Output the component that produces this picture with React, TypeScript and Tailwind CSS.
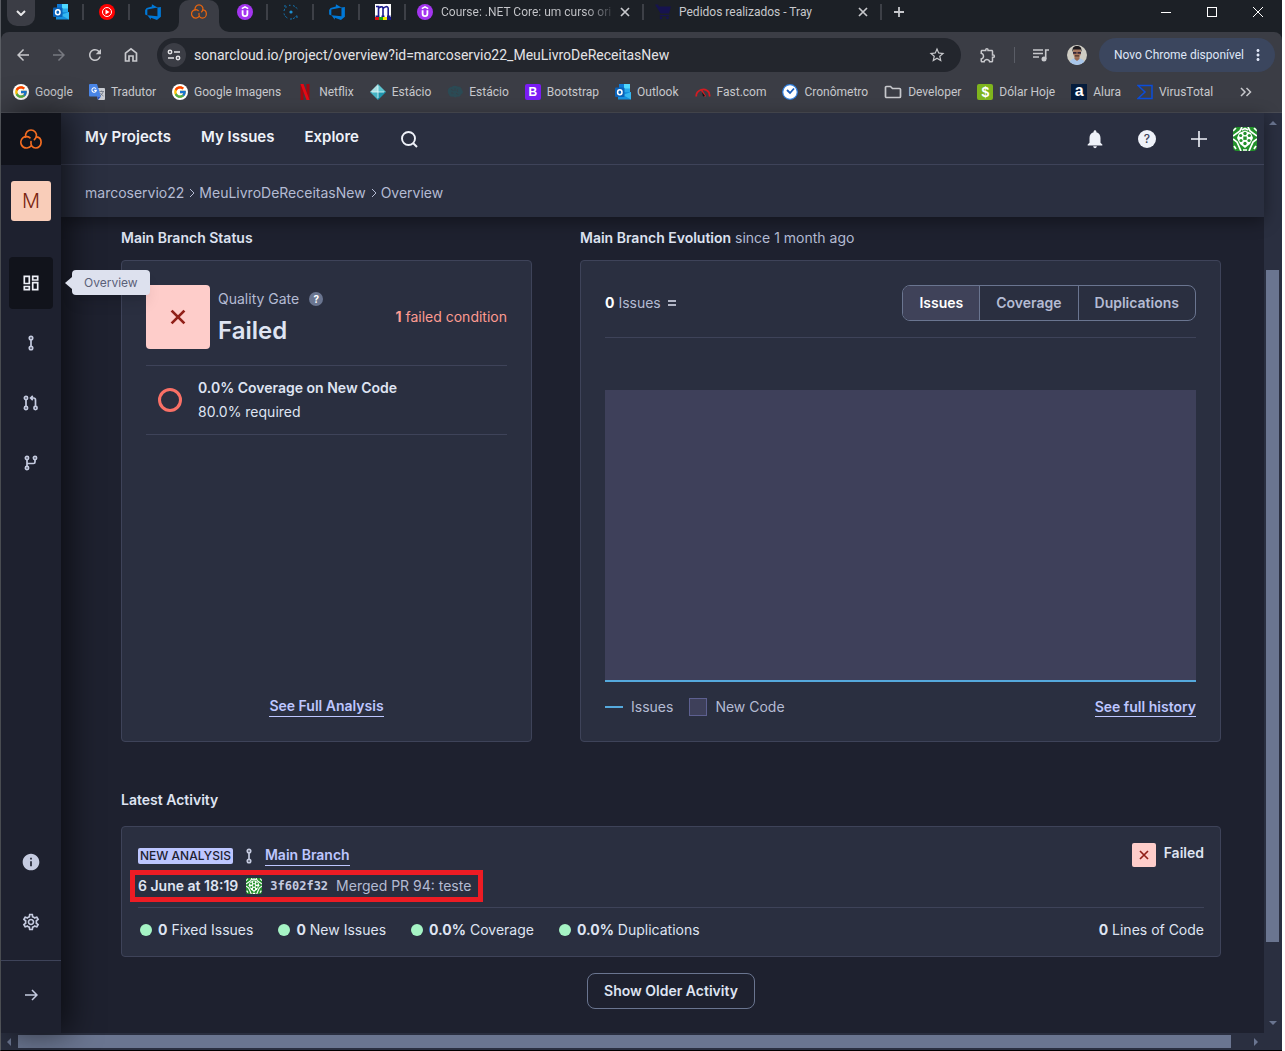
import type { ReactNode } from 'react'
import { FcGoogle } from 'react-icons/fc'
import { VscAzureDevops } from 'react-icons/vsc'
import {
  MdArrowBack,
  MdArrowForward,
  MdInfo,
  MdMoreVert,
  MdNotifications,
  MdOutlineExtension,
  MdOutlineSettings,
  MdRefresh,
  MdStarBorder,
} from 'react-icons/md'

/* ---------- Icons ---------- */

function SonarLogo({ className }: { className: string }) {
  return (
    <svg viewBox="0 0 22 20" fill="none" stroke="currentColor" strokeWidth="1.700" strokeLinecap="round" className={className}>
      <path d="M5.600 8C4.900 4.200 7.600 1 11 1s6.200 3 5.300 6.600c-.3 1.300-1 2.200-1.900 3" />
      <path d="M10 8.800C8.200 7.200 5 7.200 3.100 8.700 .9 10.400.3 13.600 1.500 16c1.100 2.200 3.400 3.100 5.500 3s3.300-1 4.200-2.200" />
      <path d="M16.400 7.900c2.700.3 4.700 2.500 4.700 5.400 0 3.200-2.400 5.700-5.400 5.700-3.200 0-5.300-2.600-4.700-6.500" />
    </svg>
  )
}

function Outlook() {
  return (
    <svg viewBox="0 0 16 16" className="size-4">
      <path d="M4 0h11v9H4z" fill="#28a8ea" />
      <path d="M9 0h6v4.500H9z" fill="#50d9ff" />
      <path d="M4 0h5v4.500H4z" fill="#0f78d4" />
      <path d="M3 8h13v7.500H3z" fill="#1490df" />
      <path d="M16 8v7.500L8 11z" fill="#35b8f1" />
      <rect x="0" y="3.500" width="9.500" height="9.500" rx="1" fill="#0a62b8" />
      <ellipse cx="4.800" cy="8.200" rx="2.200" ry="2.500" fill="none" stroke="#fff" strokeWidth="1.500" />
    </svg>
  )
}

function YouTubeMusic() {
  return (
    <svg viewBox="0 0 16 16" className="size-4">
      <circle cx="8" cy="8" r="8" fill="#f00" />
      <circle cx="8" cy="8" r="4.500" fill="none" stroke="#fff" />
      <path d="M6.500 5.500 10.500 8l-4 2.500z" fill="#fff" />
    </svg>
  )
}

function Udemy() {
  return (
    <svg viewBox="0 0 16 16" className="size-4">
      <circle cx="8" cy="8" r="8" fill="#a435f0" />
      <path d="m4.800 4.700 3.200-1.900 3.200 1.900" fill="none" stroke="#fff" strokeWidth="1.500" />
      <path d="M5.600 6.200v3.600a2.400 2.400 0 0 0 4.800 0V6.200" fill="none" stroke="#fff" strokeWidth="1.800" />
    </svg>
  )
}

function DottedOrbit() {
  return (
    <svg viewBox="0 0 16 16" fill="none" stroke="#1277b5" className="size-4">
      <circle cx="8" cy="8" r="1.600" fill="#1e8fd0" stroke="none" />
      <path d="M1 7a7 7 0 0 1 3-4.500M6 1.300h1.500M10 1.600a7 7 0 0 1 4.500 4M1 9.500a7 7 0 0 0 4 4.800M7 15a7 7 0 0 0 7-4" strokeDasharray="2 1" />
      <path d="M1 2h2M13 13h2" />
    </svg>
  )
}

function LetterM() {
  return (
    <svg viewBox="0 0 16 16" className="size-4">
      <path d="M0 0h16v13H0z" fill="#fff" />
      <path d="M1 2.500h2.500V12M.5 12.300h4M3.300 5C4 3 8 1.500 8 4.500V12M6.500 12.300h3M8 5c1-2.500 5-3.500 5.200-.5V12M12 12.300h3.500" fill="none" stroke="#1a1a8c" strokeWidth="1.600" />
      <path d="M0 13h4v3H0z" fill="#e01010" />
      <path d="M4 13h4v3H4z" fill="#18a818" />
      <path d="M8 13h4v3H8z" fill="#f5e800" />
      <path d="M12 13h4v3h-4z" fill="#1a1a8c" />
    </svg>
  )
}

function Cart() {
  return (
    <svg viewBox="0 0 16 16" className="size-4">
      <path d="M0 .5h3l1 2h12l-2 7H5.500zM5 11h9v1.200H4.500z" fill="#16134f" />
      <circle cx="6" cy="14" r="1.300" fill="#16134f" />
      <circle cx="12.500" cy="14" r="1.300" fill="#16134f" />
    </svg>
  )
}

function GoogleRound() {
  return (
    <span className="flex size-4 items-center justify-center rounded-full bg-white">
      <FcGoogle className="size-3.5" />
    </span>
  )
}

function Translate() {
  return (
    <svg viewBox="0 0 16 16" className="size-4">
      <path d="M6 4h9a1 1 0 0 1 1 1v10a1 1 0 0 1-1 1H9z" fill="#c9ccd2" />
      <path d="M1 0h7l4 12.500H1a1 1 0 0 1-1-1V1a1 1 0 0 1 1-1z" fill="#4a86e8" />
      <path d="M7 4.800a2.200 2.200 0 1 0 .3 1.600H5.200" fill="none" stroke="#fff" strokeWidth="1.100" />
      <path d="M10.500 7.500h4.500M12.600 6.500v1M14.200 7.500c-.5 2-1.800 3.500-3.200 4.300M11.500 9c.8 1.500 1.800 2.400 3 3" fill="none" stroke="#6b7280" strokeWidth=".8" />
      <path d="M9 16l3-3.500H8z" fill="#2a56c6" />
    </svg>
  )
}

function Netflix() {
  return (
    <svg viewBox="0 0 16 16" className="size-4">
      <path d="M3.500 0h3v16h-3zM9.500 0h3v16h-3z" fill="#a4060f" />
      <path d="M3.500 0h3l6 16h-3z" fill="#e50914" />
    </svg>
  )
}

function Diamond() {
  return (
    <svg viewBox="0 0 16 16" className="size-4">
      <path d="M8 0 0 8h8z" fill="#a9dfe4" />
      <path d="m8 0 8 8H8z" fill="#5cc3cf" />
      <path d="M0 8h8v8z" fill="#46b4c4" />
      <path d="M16 8H8v8z" fill="#1d93ac" />
      <path d="M8 2v12M2 8h12" stroke="#e6fafa" strokeWidth=".8" />
    </svg>
  )
}

function Brain() {
  return (
    <svg viewBox="0 0 16 16" fill="#2b4a54" className="size-4">
      <path d="M1 8c-1-3 1.500-5 3.500-5C6 1.500 9 1.200 10.500 2.500 13 2.300 15 4 15 6c1.500 1.500 1 4-1 4.500-.5 2-2.500 2.500-4 2-1 1.500-3 1-3.500 0C4 13.500 2 12 2 10.500 1.300 10 1 9 1 8z" />
      <path d="M4 5.500c1 0 2 .5 2 1.500M8 4v3M11 5c-1 1-1 2 0 3M4 9c1-.5 2 0 2.500 1M9 9.500c1 0 2 .5 2 1.500" fill="none" stroke="#3b3d45" strokeWidth=".7" />
    </svg>
  )
}

function Bootstrap() {
  return (
    <span className="flex size-4 items-center justify-center rounded-xs bg-[#7a1cf5] font-['Liberation_Sans'] text-xs font-bold text-white" aria-hidden="true">
      B
    </span>
  )
}

function Gauge() {
  return (
    <svg viewBox="0 0 16 16" fill="none" className="size-4">
      <path d="M1.200 12.500A7 7 0 0 1 14 8.500l.8 4" stroke="#d31c22" strokeWidth="1.800" />
      <path d="m6.500 6 4 6.500" stroke="#d31c22" strokeWidth="1.500" />
      <path d="M8 12.500 7 8l3 4z" fill="#101010" />
    </svg>
  )
}

function Clock() {
  return (
    <svg viewBox="0 0 16 16" fill="none" className="size-4">
      <circle cx="8" cy="8" r="7.300" fill="#fff" stroke="#2f7fe0" strokeWidth="1.200" />
      <path d="m5 6 3 3 4-4.500" stroke="#1b5cb8" strokeWidth="1.800" />
    </svg>
  )
}

function Folder() {
  return (
    <svg viewBox="0 0 18 16" fill="none" stroke="#c7c8cc" strokeWidth="1.700" className="h-4 w-[18px]">
      <path d="M1.500 3.500a1 1 0 0 1 1-1h4l2 2h7a1 1 0 0 1 1 1v7a1 1 0 0 1-1 1h-13a1 1 0 0 1-1-1z" />
    </svg>
  )
}

function Dollar() {
  return (
    <span className="flex size-4 items-center justify-center rounded-xs bg-[#7fb51d] font-['Liberation_Sans'] text-sm font-bold text-white" aria-hidden="true">
      $
    </span>
  )
}

function Alura() {
  return (
    <span className="flex size-4 items-center justify-center bg-[#041c3c] pb-0.5 font-['Liberation_Sans'] text-base leading-4 font-bold text-white" aria-hidden="true">
      a
    </span>
  )
}

function VirusTotal() {
  return (
    <svg viewBox="0 0 16 16" fill="none" stroke="#0b4dda" strokeWidth="1.500" className="size-4">
      <path d="M1 1.500h14v13H1L8 8z" />
    </svg>
  )
}

function House() {
  return (
    <svg viewBox="0 0 16 16" fill="none" stroke="currentColor" strokeWidth="1.700" className="size-4">
      <path d="M2.500 14V6.200L8 1.800l5.500 4.400V14H10V9H6v5z" />
    </svg>
  )
}

function Tune() {
  return (
    <svg viewBox="0 0 14 12" fill="none" stroke="currentColor" strokeWidth="1.500" className="h-3 w-3.5">
      <circle cx="3" cy="3" r="1.700" />
      <path d="M7 3h6M1 9h6" />
      <circle cx="11" cy="9" r="1.700" />
    </svg>
  )
}

function MusicQueue() {
  return (
    <svg viewBox="0 0 16 14" fill="none" stroke="currentColor" strokeWidth="1.600" className="h-3.5 w-4">
      <path d="M0 2h10M0 5.500h10M0 9h6M12.700 11V2H16" />
      <circle cx="11" cy="11" r="1.700" fill="currentColor" />
    </svg>
  )
}

function Cross({ className }: { className: string }) {
  return (
    <svg viewBox="0 0 10 10" fill="none" stroke="currentColor" strokeWidth="1.700" className={className}>
      <path d="m1 1 8 8M9 1 1 9" />
    </svg>
  )
}

function UserPhoto() {
  return (
    <svg viewBox="0 0 20 20" className="size-5 rounded-full">
      <path d="M0 0h20v20H0z" fill="#cfcdc4" />
      <path d="M2 20c0-5 3.500-7 8-7s8 2 8 7z" fill="#a8c6ea" />
      <path d="M7.500 11h5v3L10 16l-2.500-2z" fill="#9a6a52" />
      <ellipse cx="10" cy="7.500" rx="4" ry="5.200" fill="#a87860" />
      <path d="M5.500 7C5 2.500 7 1 10 1s5 1.500 4.500 6L13.500 4.500h-7z" fill="#1d1a1e" />
      <path d="M6 7h3.500v1.800H6zM10.500 7H14v1.800h-3.500z" fill="#33263a" />
      <path d="M8 10.300h4v1.200H8z" fill="#4a3028" />
    </svg>
  )
}

function Identicon({ className }: { className: string }) {
  return (
    <svg viewBox="0 0 24 24" className={className}>
      <path d="M0 0h24v24H0z" fill="#23912b" />
      <path d="M12 3.500 18 6l2 5-3 6-5 4-5-4-3-6 2-5z" fill="#fff" />
      <path d="M0 9 7 4 9 0M24 9l-7-5-2-4M0 12l4 3 4 9M24 12l-4 3-4 9M9 3l3-1.500L15 3M0 4l3-3M24 4l-3-3M1 19l2 3M23 19l-2 3M10 23h4" fill="none" stroke="#fff" strokeWidth="1.700" />
      <g fill="#23912b">
        <circle cx="12" cy="6.500" r="1.700" />
        <circle cx="7.700" cy="8.500" r="1.600" />
        <circle cx="16.300" cy="8.500" r="1.600" />
        <rect x="10.300" y="9.500" width="3.400" height="3.400" />
        <circle cx="8" cy="13.500" r="1.600" />
        <circle cx="16" cy="13.500" r="1.600" />
        <circle cx="12" cy="16.500" r="1.700" />
      </g>
    </svg>
  )
}

function MainBranchIcon() {
  return (
    <svg viewBox="0 0 8 16" fill="none" stroke="currentColor" strokeWidth="1.700" className="h-4 w-2">
      <circle cx="4" cy="3" r="1.700" />
      <circle cx="4" cy="13" r="1.700" />
      <path d="M4 4.700v6.600" />
    </svg>
  )
}

function PullRequestIcon() {
  return (
    <svg viewBox="0 0 16 16" fill="none" stroke="currentColor" strokeWidth="1.700" className="size-4">
      <circle cx="3" cy="3" r="1.600" />
      <circle cx="3" cy="13" r="1.600" />
      <circle cx="12.500" cy="13" r="1.600" />
      <path d="M3 4.600v6.800M12.500 11.400V5a2 2 0 0 0-2-2H8M9.800.8 7.600 3l2.200 2.200" />
    </svg>
  )
}

function BranchIcon() {
  return (
    <svg viewBox="0 0 16 16" fill="none" stroke="currentColor" strokeWidth="1.700" className="size-4">
      <circle cx="4" cy="3" r="1.600" />
      <circle cx="4" cy="13" r="1.600" />
      <circle cx="12" cy="3" r="1.600" />
      <path d="M4 4.600v6.800M12 4.600V7a1.500 1.500 0 0 1-1.500 1.500H4" />
    </svg>
  )
}

function GridIcon() {
  return (
    <svg viewBox="0 0 16 16" fill="none" stroke="currentColor" strokeWidth="1.700" className="size-4">
      <path d="M1.300 1.300h5v7.200h-5zM9.700 1.300h5v3.700h-5zM1.300 11.500h5v3.200h-5zM9.700 7.700h5v7h-5z" />
    </svg>
  )
}

/* ---------- Browser chrome ---------- */

const pinnedTabs: { label: string; icon: ReactNode; active?: boolean; divider?: boolean }[] = [
  { label: 'Outlook', icon: <Outlook />, divider: true },
  { label: 'YouTube Music', icon: <YouTubeMusic />, divider: true },
  { label: 'Azure DevOps', icon: <VscAzureDevops className="size-[18px] text-[#0078d7]" /> },
  { label: 'SonarCloud', icon: <SonarLogo className="h-[15px] w-4 text-[#e8650f]" />, active: true },
  { label: 'Udemy', icon: <Udemy />, divider: true },
  { label: 'Orbit', icon: <DottedOrbit />, divider: true },
  { label: 'Azure DevOps board', icon: <VscAzureDevops className="size-[18px] text-[#0078d7]" />, divider: true },
  { label: 'M', icon: <LetterM />, divider: true },
]

const wideTabs = [
  { title: 'Course: .NET Core: um curso ori', icon: <Udemy />, fades: true },
  { title: 'Pedidos realizados - Tray', icon: <Cart />, fades: false },
]

const bookmarks: [string, ReactNode][] = [
  ['Google', <GoogleRound />],
  ['Tradutor', <Translate />],
  ['Google Imagens', <GoogleRound />],
  ['Netflix', <Netflix />],
  ['Estácio', <Diamond />],
  ['Estácio', <Brain />],
  ['Bootstrap', <Bootstrap />],
  ['Outlook', <Outlook />],
  ['Fast.com', <Gauge />],
  ['Cronômetro', <Clock />],
  ['Developer', <Folder />],
  ['Dólar Hoje', <Dollar />],
  ['Alura', <Alura />],
  ['VirusTotal', <VirusTotal />],
]

function TabStrip() {
  return (
    <div className="flex h-8 items-start overflow-hidden bg-[#1c2026] text-[#c7c8cc]">
      <button aria-label="Search tabs" className="ml-1.5 flex h-[26px] w-7 items-center justify-center rounded-b-[10px] bg-[#3b3d45]">
        <svg viewBox="0 0 10 6" fill="none" stroke="#e8e8ea" strokeWidth="2" className="h-1.5 w-2.5">
          <path d="m1 1 4 4 4-4" />
        </svg>
      </button>
      <div className="ml-[3px] flex">
        {pinnedTabs.map((tab) => (
          <div key={tab.label} className="flex h-8 w-[46px] items-start justify-center">
            {tab.active ? (
              <button
                aria-label={tab.label}
                className="relative flex h-8 w-10 items-start justify-center rounded-t-[10px] bg-[#3b3d45] pt-1 before:absolute before:bottom-0 before:-left-2.5 before:size-2.5 before:rounded-br-[10px] before:shadow-[5px_5px_0_5px_#3b3d45] before:[clip-path:inset(0)] after:absolute after:-right-2.5 after:bottom-0 after:size-2.5 after:rounded-bl-[10px] after:shadow-[-5px_5px_0_5px_#3b3d45] after:[clip-path:inset(0)]"
              >
                {tab.icon}
              </button>
            ) : (
              <button aria-label={tab.label} className={`flex h-6 flex-1 items-center justify-center ${tab.divider ? 'bg-[linear-gradient(#3d4047,#3d4047)] bg-[size:2px_16px] bg-right bg-no-repeat' : ''}`}>
                {tab.icon}
              </button>
            )}
          </div>
        ))}
      </div>
      {wideTabs.map((tab) => (
        <div key={tab.title} className="flex h-6 w-[238px] items-center bg-[linear-gradient(#3d4047,#3d4047)] bg-[size:2px_16px] bg-right bg-no-repeat pr-3.5 pl-[11px]">
          {tab.icon}
          <span className={`ml-2 whitespace-nowrap ${tab.fades ? 'bg-linear-to-r from-[#c7c8cc] from-85% to-[#3d4047] bg-clip-text text-transparent' : ''}`}>{tab.title}</span>
          <button aria-label={`Close ${tab.title}`} className="ml-auto">
            <Cross className="size-2.5" />
          </button>
        </div>
      ))}
      <button aria-label="New tab" className="ml-3 flex h-6 items-center">
        <svg viewBox="0 0 10 10" fill="none" stroke="currentColor" strokeWidth="1.800" className="size-2.5">
          <path d="M5 0v10M0 5h10" />
        </svg>
      </button>
      <div className="mr-px ml-auto flex h-6 text-white">
        <button aria-label="Minimize" className="flex w-[46px] items-center justify-center">
          <span className="h-px w-2.5 bg-white" />
        </button>
        <button aria-label="Maximize" className="flex w-[46px] items-center justify-center">
          <span className="size-2.5 border border-white" />
        </button>
        <button aria-label="Close" className="flex w-[46px] items-center justify-center">
          <svg viewBox="0 0 10 10" stroke="#fff" className="size-2.5">
            <path d="m0 0 10 10M10 0 0 10" />
          </svg>
        </button>
      </div>
    </div>
  )
}

function Toolbar() {
  return (
    <div className="bg-[#1c2026]">
      <div className="flex h-[46px] items-center rounded-t-lg bg-[#3b3d45] pr-[7px] pl-[13px] text-[#c7c8cc]">
        <div className="flex gap-[18px]">
          <button aria-label="Back"><MdArrowBack className="size-[18px]" /></button>
          <button aria-label="Forward" className="text-[#777980]"><MdArrowForward className="size-[18px]" /></button>
          <button aria-label="Reload"><MdRefresh className="size-[18px]" /></button>
          <button aria-label="Home" className="px-px"><House /></button>
        </div>
        <div className="ml-[17px] flex h-[34px] flex-1 items-center rounded-full bg-[#23262d] pr-[15px] pl-[5px]">
          <button aria-label="Site information" className="flex size-6 items-center justify-center rounded-full bg-[#3b3d45] text-[#e3e3e6]">
            <Tune />
          </button>
          <input
            aria-label="Address"
            className="ml-2 min-w-0 flex-1 bg-transparent text-sm text-[#e3e3e6] outline-none"
            defaultValue="sonarcloud.io/project/overview?id=marcoservio22_MeuLivroDeReceitasNew"
          />
          <button aria-label="Bookmark this page"><MdStarBorder className="size-[18px]" /></button>
        </div>
        <button aria-label="Extensions" className="ml-[18px]"><MdOutlineExtension className="size-[18px]" /></button>
        <span className="ml-[17px] h-4 w-px bg-[#5a5d66]" />
        <button aria-label="Media controls" className="ml-[18px]"><MusicQueue /></button>
        <button aria-label="Profile" className="ml-[18px]"><UserPhoto /></button>
        <button className="ml-3 flex h-[34px] w-[176px] items-center justify-between rounded-full bg-[#3b465e] pr-2 pl-[15px] whitespace-nowrap text-[#dfe6f7]">
          Novo Chrome disponível
          <MdMoreVert className="size-[18px] shrink-0" />
        </button>
      </div>
    </div>
  )
}

function BookmarksBar() {
  return (
    <nav className="flex h-[35px] items-center gap-4 overflow-hidden border-b border-[#4a4c54] bg-[#3b3d45] pb-1.5 pl-3 text-[#c7c8cc]">
      {bookmarks.map(([label, icon], i) => (
        <a key={i} href="#" className="flex items-center gap-1.5 whitespace-nowrap">
          {icon}
          {label}
        </a>
      ))}
      <button aria-label="More bookmarks" className="mr-[30px] ml-auto">
        <svg viewBox="0 0 12 10" fill="none" stroke="currentColor" strokeWidth="1.500" className="h-2.5 w-3">
          <path d="m1 1 4 4-4 4M6.500 1l4 4-4 4" />
        </svg>
      </button>
    </nav>
  )
}

/* ---------- Application ---------- */

function SideItem({ label, active, children }: { label: string; active?: boolean; children: ReactNode }) {
  return (
    <a href="#" aria-label={label} className={`flex h-[52px] w-11 items-center justify-center rounded ${active ? 'bg-[#11131b] text-[#eef0f7]' : ''}`}>
      {children}
    </a>
  )
}

function Sidebar() {
  return (
    <aside className="relative z-10 flex w-[60px] shrink-0 flex-col items-center bg-[#1e212f] text-[#c5cbe0] shadow-[8px_0_32px_rgba(0,0,0,0.6)]">
      <a href="#" aria-label="SonarCloud" className="flex h-[52px] w-full items-center justify-center bg-[#11131b] text-[#f36c21]">
        <SonarLogo className="h-5 w-[22px]" />
      </a>
      <a href="#" className="mt-4 flex size-10 items-center justify-center rounded-[3px] bg-[#f9cdb9] text-xl font-light text-[#7a2410]">
        M
      </a>
      <nav className="mt-9 flex flex-col gap-2">
        <div className="relative">
          <SideItem label="Overview" active><GridIcon /></SideItem>
          <div role="tooltip" className="absolute top-[13px] left-[63px] flex h-[25px] items-center rounded bg-[#dde1ee] px-3 text-xs text-[#5a6078] shadow-lg before:absolute before:-left-[7px] before:border-y-[6px] before:border-r-[7px] before:border-y-transparent before:border-r-[#dde1ee]">
            Overview
          </div>
        </div>
        <SideItem label="Main branch"><MainBranchIcon /></SideItem>
        <SideItem label="Pull requests"><PullRequestIcon /></SideItem>
        <SideItem label="Branches"><BranchIcon /></SideItem>
      </nav>
      <div className="mt-auto flex flex-col gap-2 pb-3">
        <SideItem label="Information"><MdInfo className="size-5" /></SideItem>
        <SideItem label="Administration"><MdOutlineSettings className="size-5" /></SideItem>
      </div>
      <button aria-label="Expand sidebar" className="flex h-[73px] w-full items-center justify-center border-t border-[#3e4359] pb-1">
        <svg viewBox="0 0 14 12" fill="none" stroke="currentColor" strokeWidth="1.500" className="h-3 w-3.5">
          <path d="M1 6h12M8 1l5 5-5 5" />
        </svg>
      </button>
    </aside>
  )
}

function Header() {
  return (
    <header className="relative z-[5] bg-[#2a2f40] shadow-[0_4px_16px_rgba(0,0,0,0.4)]">
      <div className="flex h-[52px] items-center border-b border-[#3e4359] pr-[7px] pl-6">
        <nav className="flex gap-[30px] pb-[3px] text-[15px] font-semibold text-[#eff2f9]">
          <a href="#">My Projects</a>
          <a href="#">My Issues</a>
          <a href="#">Explore</a>
        </nav>
        <button aria-label="Search" className="ml-[41px] text-[#eff2f9]">
          <svg viewBox="0 0 18 18" fill="none" stroke="currentColor" strokeWidth="1.900" className="size-[18px]">
            <circle cx="8.500" cy="8.500" r="6.500" />
            <path d="m13 13 4 4" />
          </svg>
        </button>
        <div className="ml-auto flex items-center text-[#eff2f9]">
          <button aria-label="Notifications"><MdNotifications className="size-[22px]" /></button>
          <button aria-label="Help" className="ml-8 flex size-[18px] items-center justify-center rounded-full bg-[#eff2f9] text-xs font-medium text-[#3e4359]">
            ?
          </button>
          <button aria-label="Create" className="ml-[33px]">
            <svg viewBox="0 0 20 20" fill="none" stroke="currentColor" strokeWidth="1.600" className="size-5">
              <path d="M10 2v16M2 10h16" />
            </svg>
          </button>
          <button aria-label="Account" className="ml-6">
            <Identicon className="size-6 rounded-sm" />
          </button>
        </div>
      </div>
      <nav aria-label="Breadcrumb" className="flex h-[52px] items-center gap-1 pt-1 pl-6 text-[#b4bbd3]">
        <a href="#">marcoservio22</a>
        <BreadcrumbArrow />
        <a href="#">MeuLivroDeReceitasNew</a>
        <BreadcrumbArrow />
        <span>Overview</span>
      </nav>
    </header>
  )
}

function BreadcrumbArrow() {
  return (
    <svg viewBox="0 0 7 10" fill="none" stroke="currentColor" className="h-2.5 w-[7px]">
      <path d="m2 1 4 4-4 4" />
    </svg>
  )
}

function Status() {
  return (
    <section className="flex flex-col">
      <h2 className="mb-3 font-semibold text-[#dfe4f2]">Main Branch Status</h2>
      <div className="flex h-[482px] flex-col rounded border border-[#3e4359] bg-[#2a2f40] p-6">
        <div className="flex h-[81px] items-start border-b border-[#3e4359]">
          <span className="flex size-16 items-center justify-center rounded bg-[#fecdca] text-[#912018]">
            <Cross className="size-4" />
          </span>
          <div className="ml-2">
            <p className="flex h-7 items-center gap-2.5 text-[#b4bbd3]">
              Quality Gate
              <span className="flex size-3.5 items-center justify-center rounded-full bg-[#6a7590] text-[10px] font-bold text-white">?</span>
            </p>
            <p className="text-2xl leading-9 font-semibold text-[#dfe4f2]">Failed</p>
          </div>
          <p className="ml-auto pt-[22px] text-[#fd9b91]">
            <b className="font-bold">1</b> failed condition
          </p>
        </div>
        <div className="flex h-[69px] items-center border-b border-[#3e4359] pl-3 text-[#dfe4f2]">
          <span className="size-6 rounded-full border-[3px] border-[#f97066]" />
          <p className="ml-4 leading-6">
            <span className="font-semibold">0.0% Coverage on New Code</span>
            <br />
            80.0% required
          </p>
        </div>
        <a href="#" className="mx-auto mt-auto border-b border-[#bdc6ff] font-semibold text-[#bdc6ff]">
          See Full Analysis
        </a>
      </div>
    </section>
  )
}

function Evolution() {
  return (
    <section className="flex flex-col">
      <h2 className="mb-3 text-[#b4bbd3]">
        <span className="font-semibold text-[#dfe4f2]">Main Branch Evolution</span> since 1 month ago
      </h2>
      <div className="flex h-[482px] flex-col rounded border border-[#3e4359] bg-[#2a2f40] p-6">
        <div className="flex h-[53px] items-start justify-between border-b border-[#3e4359]">
          <p className="flex h-9 items-center text-[#b4bbd3]">
            <b className="font-bold text-white">0</b>&nbsp;Issues
            <svg viewBox="0 0 8 6" stroke="#dfe4f2" strokeWidth="1.400" className="ml-[7px] h-1.5 w-2">
              <path d="M0 1h8M0 5h8" />
            </svg>
          </p>
          <div className="flex h-9 divide-x divide-[#6a7590] overflow-hidden rounded-lg border border-[#6a7590] font-semibold text-[#b4bbd3]">
            <button className="bg-[#3f4259] px-4 text-white">Issues</button>
            <button className="px-4">Coverage</button>
            <button className="px-4">Duplications</button>
          </div>
        </div>
        <div className="mt-[52px] h-[292px] border-b-2 border-[#55a9dd] bg-[#3e405a]" />
        <div className="mt-[15px] flex items-center text-[#b4bbd3]">
          <span className="h-0.5 w-[18px] bg-[#55a9dd]" />
          <span className="ml-2">Issues</span>
          <span className="ml-4 size-[18px] border border-[#5d6090] bg-[#3e405a]" />
          <span className="ml-2">New Code</span>
          <a href="#" className="ml-auto border-b border-[#bdc6ff] leading-[18px] font-semibold text-[#bdc6ff]">
            See full history
          </a>
        </div>
      </div>
    </section>
  )
}

const measures = [
  ['0', 'Fixed Issues'],
  ['0', 'New Issues'],
  ['0.0%', 'Coverage'],
  ['0.0%', 'Duplications'],
]

function Activity() {
  return (
    <section className="mt-12">
      <h2 className="mb-4 font-semibold text-[#dfe4f2]">Latest Activity</h2>
      <div className="rounded border border-[#3e4359] bg-[#2a2f40] p-4 text-[#dfe4f2]">
        <div className="flex justify-between border-b border-[#3e4359] pb-[9px]">
          <div>
            <div className="flex items-center pt-0.5">
              <span className="rounded-xs bg-[#bdc6ff] px-0.5 text-xs leading-4 font-medium text-[#1e212f]">NEW ANALYSIS</span>
              <span className="mx-3 text-[#c5cbe0]"><MainBranchIcon /></span>
              <a href="#" className="border-b border-[#bdc6ff] font-semibold text-[#bdc6ff]">
                Main Branch
              </a>
            </div>
            <div className="relative mt-2 flex h-6 items-center gap-2 after:absolute after:-inset-x-2 after:-inset-y-1 after:-right-3 after:border-[5px] after:border-[#ed1c24]">
              <span className="font-semibold">6 June at 18:19</span>
              <Identicon className="size-4 rounded-xs" />
              <span className="font-['DejaVu_Sans_Mono',monospace] text-xs font-bold text-[#c5cbe0]">3f602f32</span>
              <span className="text-[#b4bbd3]">Merged PR 94: teste</span>
            </div>
          </div>
          <div className="flex items-start gap-2 font-semibold">
            <span className="flex size-6 items-center justify-center rounded-xs bg-[#fecdca] text-[#912018]">
              <Cross className="size-2.5" />
            </span>
            Failed
          </div>
        </div>
        <div className="flex items-center gap-[25px] pt-3 pl-0.5">
          {measures.map(([value, label]) => (
            <p key={label} className="flex items-center">
              <span className="mr-1.5 size-3 rounded-full bg-[#a6f4c5]" />
              <b className="font-bold">{value}</b>&nbsp;{label}
            </p>
          ))}
          <p className="ml-auto"><b className="font-bold">0</b> Lines of Code</p>
        </div>
      </div>
      <div className="mt-4 flex justify-center">
        <button className="h-9 rounded-lg border border-[#6a7590] px-4 font-semibold text-[#dfe4f2]">Show Older Activity</button>
      </div>
    </section>
  )
}

export default function App() {
  return (
    <div className="flex min-h-screen flex-col bg-white pr-[3px]">
      <div className="flex flex-1 flex-col border-b border-l border-b-black border-l-[#5a5d63] font-['Roboto',sans-serif] text-xs">
        <TabStrip />
        <Toolbar />
        <BookmarksBar />
        <div className="flex flex-1 bg-[#2a2f40] font-['Inter',sans-serif] text-sm leading-5">
          <Sidebar />
          <div className="flex min-w-0 flex-1 flex-col bg-[#1e212f]">
            <Header />
            <main className="pt-[11px] pr-[43px] pb-6 pl-[60px]">
              <div className="grid grid-cols-[411fr_641fr] gap-12">
                <Status />
                <Evolution />
              </div>
              <Activity />
            </main>
          </div>
          <div className="flex w-[18px] flex-col items-center py-2 text-[#6a7590]">
            <span className="border-x-4 border-b-4 border-x-transparent border-b-current" />
            <span className="mt-[145px] mr-px w-[13px] flex-1 bg-current" />
            <span className="mt-[79px] border-x-4 border-t-4 border-x-transparent border-t-current" />
          </div>
        </div>
        <div className="flex h-[17px] items-center bg-[#2a2f40] pl-1.5 text-[#6a7590]">
          <span className="border-y-4 border-r-4 border-y-transparent border-r-current" />
          <span className="ml-[7px] h-[13px] flex-1 bg-current" />
          <span className="mr-6 ml-[23px] border-y-4 border-l-4 border-y-transparent border-l-current" />
        </div>
      </div>
    </div>
  )
}
